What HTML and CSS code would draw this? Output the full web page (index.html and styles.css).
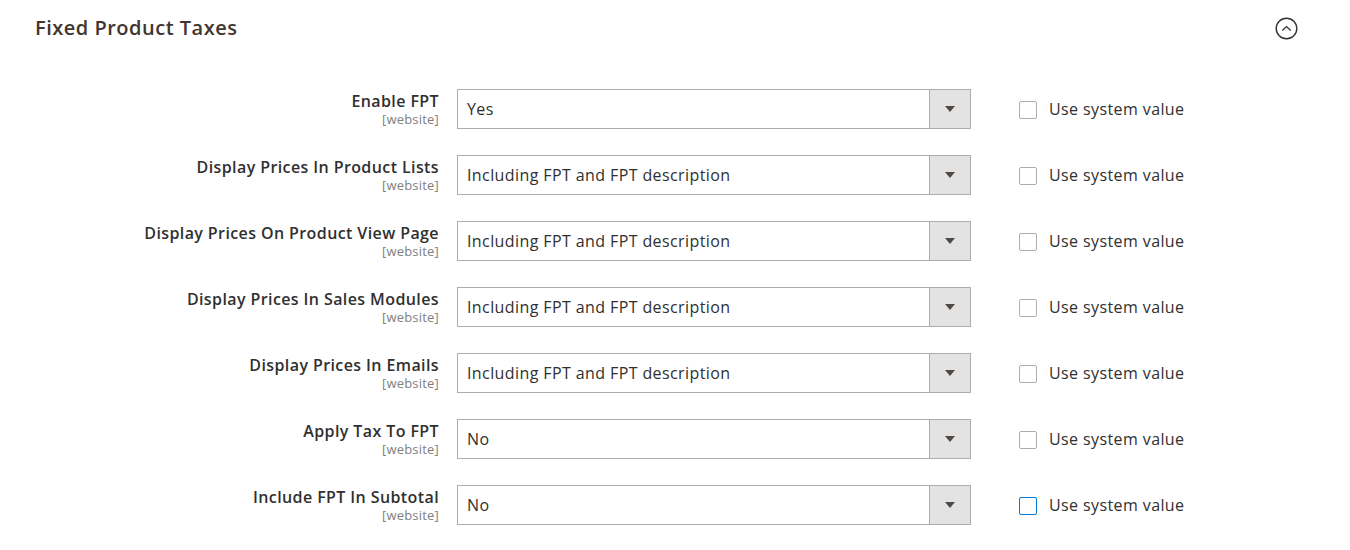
FILE: index.html
```html
<!DOCTYPE html>
<html>
<head>
<meta charset="utf-8">
<link rel="stylesheet" href="styles.css">
</head>
<body>
<div class="section">
  <div class="section-head">
    <h2 class="title">Fixed Product Taxes</h2>
    <span class="toggle">
      <svg width="23" height="23" viewBox="0 0 23 23"><circle cx="11.5" cy="11.5" r="10.3" fill="none" stroke="#333" stroke-width="1.4"/><path d="M7.3 13.6 L11.5 9.6 L15.7 13.6" fill="none" stroke="#333" stroke-width="1.4"/></svg>
    </span>
  </div>
  <div class="rows">
    <div class="row">
      <div class="label"><span class="name">Enable FPT</span><span class="scope">[website]</span></div>
      <div class="select"><span class="value">Yes</span><span class="arrow"><i></i></span></div>
      <label class="use"><span class="box"></span>Use system value</label>
    </div>
    <div class="row">
      <div class="label"><span class="name">Display Prices In Product Lists</span><span class="scope">[website]</span></div>
      <div class="select"><span class="value">Including FPT and FPT description</span><span class="arrow"><i></i></span></div>
      <label class="use"><span class="box"></span>Use system value</label>
    </div>
    <div class="row">
      <div class="label"><span class="name">Display Prices On Product View Page</span><span class="scope">[website]</span></div>
      <div class="select"><span class="value">Including FPT and FPT description</span><span class="arrow"><i></i></span></div>
      <label class="use"><span class="box"></span>Use system value</label>
    </div>
    <div class="row">
      <div class="label"><span class="name">Display Prices In Sales Modules</span><span class="scope">[website]</span></div>
      <div class="select"><span class="value">Including FPT and FPT description</span><span class="arrow"><i></i></span></div>
      <label class="use"><span class="box"></span>Use system value</label>
    </div>
    <div class="row">
      <div class="label"><span class="name">Display Prices In Emails</span><span class="scope">[website]</span></div>
      <div class="select"><span class="value">Including FPT and FPT description</span><span class="arrow"><i></i></span></div>
      <label class="use"><span class="box"></span>Use system value</label>
    </div>
    <div class="row">
      <div class="label"><span class="name">Apply Tax To FPT</span><span class="scope">[website]</span></div>
      <div class="select"><span class="value">No</span><span class="arrow"><i></i></span></div>
      <label class="use"><span class="box"></span>Use system value</label>
    </div>
    <div class="row">
      <div class="label"><span class="name">Include FPT In Subtotal</span><span class="scope">[website]</span></div>
      <div class="select"><span class="value">No</span><span class="arrow"><i></i></span></div>
      <label class="use"><span class="box focus"></span>Use system value</label>
    </div>
  </div>
</div>
</body>
</html>
```
FILE: styles.css
```css
html, body {
  margin: 0;
  padding: 0;
  background: #fff;
}
body {
  font-family: "Open Sans", "Noto Sans", sans-serif;
  color: #303030;
}
.section {
  padding: 0 0 0 35px;
}
.section-head {
  display: flex;
  align-items: center;
  justify-content: space-between;
  height: 54px;
  width: 1263px;
}
.title {
  margin: 0;
  font-size: 20px;
  font-weight: 600;
  color: #41362f;
  letter-spacing: 0.5px;
}
.toggle {
  display: flex;
  width: 23px;
  height: 23px;
  margin-top: 2px;
}
.rows {
  display: flex;
  flex-direction: column;
  gap: 26px;
  padding-top: 35px;
}
.row {
  display: flex;
  align-items: flex-start;
  height: 40px;
}
.label {
  width: 404px;
  display: flex;
  flex-direction: column;
  align-items: flex-end;
  margin-right: 18px;
  padding-top: 1px;
}
.name {
  font-size: 16px;
  font-weight: 600;
  line-height: 22px;
  letter-spacing: 0.4px;
  color: #303030;
}
.scope {
  font-size: 13px;
  line-height: 15px;
  letter-spacing: 0.2px;
  color: #808080;
}
.select {
  width: 512px;
  height: 38px;
  border: 1px solid #adadad;
  display: flex;
  align-items: center;
  justify-content: space-between;
}
.value {
  font-size: 16px;
  letter-spacing: 0.4px;
  padding-left: 9px;
  color: #303030;
}
.arrow {
  width: 40px;
  height: 38px;
  background: #e3e3e3;
  border-left: 1px solid #adadad;
  display: flex;
  align-items: center;
  justify-content: center;
}
.arrow i {
  width: 0;
  height: 0;
  border-left: 5px solid transparent;
  border-right: 5px solid transparent;
  border-top: 6px solid #514943;
}
.use {
  display: flex;
  align-items: center;
  height: 40px;
  margin-left: 48px;
  font-size: 16px;
  letter-spacing: 0.4px;
  color: #303030;
}
.box {
  width: 16px;
  height: 16px;
  border: 1px solid #adadad;
  border-radius: 2px;
  margin-right: 12px;
  margin-top: 2px;
}
.box.focus {
  border-color: #007bdb;
}
```
